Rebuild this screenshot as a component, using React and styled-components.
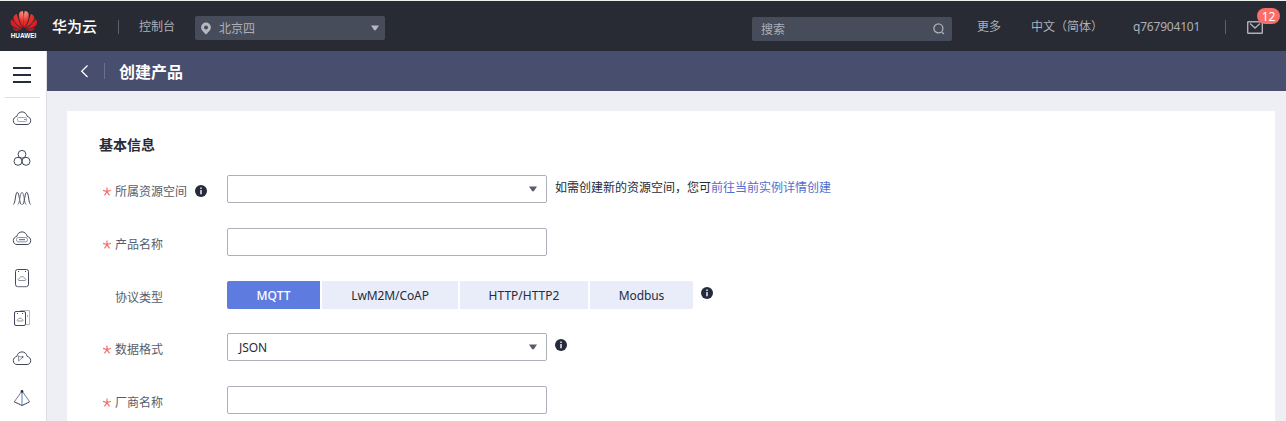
import React from "react";
import styled, { createGlobalStyle } from "styled-components";

const GlobalStyle = createGlobalStyle`
  * { box-sizing: border-box; }
  body {
    margin: 0;
    background: #eeeff5;
    font: 12px/18px "Noto Sans", "Noto Sans CJK SC", sans-serif;
    color: #252b3a;
    overflow: hidden;
  }
  svg { display: block; flex: none; }
`;

const Page = styled.div`
  height: 421px;
  display: flex;
  flex-direction: column;
  overflow: hidden;
`;

const Header = styled.header`
  height: 51px;
  flex: none;
  display: flex;
  align-items: center;
  border-top: 1px solid #eef0ee;
  background: #282b33;
  color: #adb0b8;
  padding: 2px 0 0 10px;
  white-space: nowrap;
`;

const Brand = styled.div`
  width: 108px;
  padding-bottom: 2px;
  display: flex;
  align-items: center;
  gap: 14px;
  color: #fff;
  font-size: 15px;
  font-weight: 500;
`;

const Divider = styled.i`
  width: 1px;
  height: ${(p) => p.$height || 14}px;
  margin-left: ${(p) => p.$gap || 0}px;
  background: ${(p) => p.$color || "#5e6168"};
  flex: none;
`;

const NavText = styled.span`
  width: ${(p) => p.$width}px;
  margin-left: ${(p) => p.$gap}px;
  letter-spacing: ${(p) => p.$spacing || 0}px;
  flex: none;
`;

const HeaderField = styled.div`
  width: ${(p) => p.$width}px;
  height: 24px;
  margin-left: ${(p) => p.$gap}px;
  margin-top: ${(p) => p.$drop}px;
  padding: 0 ${(p) => p.$right}px 0 ${(p) => p.$left}px;
  display: flex;
  align-items: center;
  background: #464c59;
  border-radius: 2px;
  flex: none;
`;

const FieldText = styled.span`
  flex: 1;
  margin-left: ${(p) => p.$gap || 0}px;
  padding-top: 1px;
`;

const Mail = styled.div`
  position: relative;
  margin-left: 21px;
`;

const Badge = styled.span`
  position: absolute;
  left: 10px;
  top: -13px;
  width: 23px;
  height: 16px;
  border-radius: 8px;
  background: #fa6d68;
  color: #fff;
  line-height: 17px;
  text-align: center;
`;

const Body = styled.div`
  flex: 1;
  min-height: 0;
  display: flex;
`;

const Sidebar = styled.nav`
  width: 47px;
  flex: none;
  background: #fff;
  border-right: 1px solid #dddfe7;
  display: flex;
  flex-direction: column;
`;

const MenuButton = styled.div`
  height: 47px;
  flex: none;
  margin: 0 6px 0 5px;
  padding: 16px 0 0 8px;
  border-bottom: 1px solid #dddee6;
`;

const SideItem = styled.div`
  height: 40px;
  flex: none;
  display: flex;
  align-items: center;
  padding-left: 12px;
`;

const Main = styled.main`
  flex: 1;
  min-width: 0;
  display: flex;
  flex-direction: column;
`;

const TitleBar = styled.div`
  height: 40px;
  flex: none;
  display: flex;
  align-items: center;
  padding-left: 33px;
  background: #484e6e;
`;

const Title = styled.h1`
  margin: 0 0 0 14px;
  padding-top: 1px;
  font-size: 16px;
  line-height: 22px;
  font-weight: 700;
  color: #fff;
`;

const Card = styled.section`
  flex: 1;
  min-height: 0;
  margin: 20px 11px 0 20px;
  padding: 24px 32px 0;
  background: #fff;
`;

const Heading = styled.h2`
  margin: 0 0 20px;
  font-size: 14px;
  line-height: 20px;
  font-weight: 700;
`;

const Row = styled.div`
  height: 28px;
  margin-bottom: ${(p) => p.$after}px;
  display: flex;
`;

const Label = styled.div`
  width: 128px;
  padding: 5px 0 0 4px;
  flex: none;
  display: flex;
  align-items: flex-start;
  color: #575d6c;
  line-height: 24px;
`;

const Star = styled.span`
  width: 12px;
  padding-top: 7px;
`;

const Input = styled.div`
  width: 320px;
  height: 28px;
  flex: none;
  display: flex;
  align-items: center;
  justify-content: space-between;
  padding: 0 9px 0 11px;
  border: 1px solid #adb0b8;
  border-radius: 2px;
  background: #fff;
`;

const InputText = styled.span`
  padding-top: 1px;
  letter-spacing: -0.1px;
`;

const InfoSlot = styled.span`
  margin: ${(p) => p.$top}px 0 0 8px;
`;

const Hint = styled.span`
  margin: 4px 0 0 8px;
`;

const Link = styled.a`
  color: #526ecc;
`;

const Tabs = styled.div`
  display: flex;
  gap: 2px;
  border-radius: 2px;
  overflow: hidden;
`;

const Tab = styled.button`
  width: ${(p) => p.$width}px;
  height: 28px;
  padding: 1px 0 0;
  border: 0;
  font: inherit;
  letter-spacing: ${(p) => p.$spacing}px;
  background: ${(p) => (p.$active ? "#5e7ce0" : "#e9edfa")};
  color: ${(p) => (p.$active ? "#fff" : "#252b3a")};
  font-weight: ${(p) => (p.$active ? 500 : 400)};
`;

const Logo = () => (
  <svg width="28" height="32" viewBox="0 0 28 32">
    <defs>
      <radialGradient id="petal" gradientUnits="userSpaceOnUse" cx="14" cy="2" r="20">
        <stop offset="0" stopColor="#f9a090" />
        <stop offset=".45" stopColor="#e8302b" />
        <stop offset="1" stopColor="#d9101c" />
      </radialGradient>
    </defs>
    <g fill="url(#petal)">
      <path d="M13.300 18C10.500 13 8.300 8.500 8.900 4.200C9.200 2.200 11 1.200 12.900 1.100C14 6 14.100 12 13.300 18Z" />
      <path d="M14.300 18C17.100 13 19.300 8.500 18.700 4.200C18.400 2.200 16.600 1.200 14.700 1.100C13.600 6 13.500 12 14.300 18Z" />
      <path d="M12.500 18.300C8 15.500 3.800 12 3.300 8.500C3.100 6.200 4.600 4.600 6.700 3.900C8 9 10 14 12.500 18.300Z" />
      <path d="M15.100 18.300C19.600 15.500 23.800 12 24.300 8.500C24.500 6.200 23 4.600 20.900 3.900C19.600 9 17.600 14 15.100 18.300Z" />
      <path d="M11.800 19C7 18.800 2.300 17.200 1 14.500C.2 12.600.6 10.800 1.700 9.300C4.700 13.200 8.200 16.500 11.800 19Z" />
      <path d="M15.800 19C20.600 18.800 25.300 17.200 26.600 14.500C27.400 12.600 27 10.800 25.900 9.300C22.900 13.200 19.400 16.500 15.800 19Z" />
      <path d="M11.500 19.600C9 21.200 4.600 21.700 2.300 18C5 18.900 8.200 19.400 11.500 19.600Z" />
      <path d="M16.100 19.600C18.600 21.200 23 21.700 25.300 18C22.600 18.900 19.400 19.400 16.100 19.600Z" />
    </g>
    <text x="0.700" y="28.300" textLength="25.600" lengthAdjust="spacingAndGlyphs" fill="#fff" fontFamily="Liberation Sans, sans-serif" fontWeight="700" fontSize="7">HUAWEI</text>
  </svg>
);

const Caret = ({ color = "#575d6c", width = 8 }) => (
  <svg width={width} height="6" viewBox="0 0 8 6">
    <path d="M0 0.500H8L4.800 5.200H3.200Z" fill={color} />
  </svg>
);

const Pin = () => (
  <svg width="10" height="13" viewBox="0 0 10 13">
    <path fillRule="evenodd" fill="#b5b8bf" d="M5 .5a4.900 4.900 0 0 1 4.900 4.900C9.900 8.200 7 10 5 12.700C3 10 .1 8.200.1 5.400A4.900 4.900 0 0 1 5 .5ZM5 3.400a2 2 0 1 0 0 4a2 2 0 0 0 0-4Z" />
  </svg>
);

const Magnifier = () => (
  <svg width="12" height="12" viewBox="0 0 12 12" fill="none" stroke="#adb0b8" strokeWidth="1.300">
    <circle cx="5.400" cy="5.400" r="4.500" />
    <path d="M8.600 9L11 10.900" />
  </svg>
);

const Envelope = () => (
  <svg width="16" height="13" viewBox="0 0 16 13" fill="none" stroke="#adb0b8" strokeWidth="1.400">
    <rect x=".7" y=".7" width="14.600" height="11.600" rx=".5" />
    <path d="M3 2.500L8 7L13 2.500" />
  </svg>
);

const Info = () => (
  <svg width="12" height="12" viewBox="0 0 12 12">
    <circle cx="6" cy="6" r="6" fill="#252b3a" />
    <path d="M5.200 2.500H6.800V3.900H5.200ZM5.200 4.900H6.800V9.300H5.200Z" fill="#dfe4ee" />
  </svg>
);

const Asterisk = () => (
  <svg width="9" height="9" viewBox="0 0 9 9" stroke="#f66f6a" strokeWidth="1.200" fill="none">
    <path d="M4 .5V4.600M0 3.300L4 4.600L8 3.300M4 4.600L1.500 8.300M4 4.600L6.500 8.300" />
  </svg>
);

const Glyph = ({ children }) => (
  <svg width="20" height="20" viewBox="0 0 20 20" fill="none" stroke="#41485c" strokeWidth="1" strokeLinejoin="round">
    {children}
  </svg>
);

const cloud = "M5 16.500C2.700 16.500 1.300 14.800 1.300 12.600C1.300 10.500 2.700 8.900 4.800 8.400C5.400 5.700 7.400 3.900 10 3.900C12.600 3.900 14.600 5.700 15.200 8.400C17.300 8.900 18.700 10.500 18.700 12.600C18.700 14.800 17.300 16.500 15 16.500Z";

const sideIcons = [
  <>
    <path d={cloud} />
    <rect x="5.500" y="9.500" width="9" height="4" rx="1.200" stroke="#a2a6b0" />
    <path d="M12.500 11.500h1" stroke="#252b3a" />
  </>,
  <>
    <circle cx="10" cy="6.300" r="3.900" />
    <circle cx="6" cy="13.300" r="4" />
    <circle cx="14" cy="13.300" r="4" />
  </>,
  <>
    <path d="M1.300 16.500C3.600 15.500 3.200 4.300 5.300 4.300S7.400 16.500 9.500 16.500" />
    <path d="M5.700 16.500C7.900 16.500 7.800 4.300 10 4.300S12.100 16.500 14.300 16.500" stroke="#747a88" />
    <path d="M10.500 16.500C12.600 16.500 12.600 4.300 14.700 4.300S16.400 15.500 18.700 16.500" />
  </>,
  <>
    <path d={cloud} />
    <rect x="4.500" y="9.500" width="11" height="4.400" rx="2" stroke="#8d929e" />
    <path d="M7 11.700h6" stroke="#575d6c" />
  </>,
  <>
    <rect x="3.500" y="1.500" width="13" height="17" rx="2" />
    <path d="M5 19H15" stroke="#c0c3ca" />
    <path d="M6 3.500h1M13 3.500h1" />
    <path d="M7 12.500H13C14 12.500 14 10.600 12.500 10.400C12 8 8 8 7.500 10.400C6 10.600 6 12.500 7 12.500Z" stroke="#8d929e" />
  </>,
  <>
    <path d="M8 2.500H17.500V16.500H14" stroke="#b5b8c0" />
    <rect x="2.500" y="3.500" width="11" height="14" rx="1.500" />
    <path d="M5 5.500h1M10 5.500h1" />
    <path d="M15.500 7v2" stroke="#b5b8c0" />
    <path d="M5.800 13H10.500C11.400 13 11.200 11.500 10.300 11.400C9.800 9.700 6.600 9.700 6.100 11.400C5 11.500 5 13 5.800 13Z" stroke="#8d929e" />
  </>,
  <>
    <path d={cloud} />
    <path d="M6.500 7.500V13L10.500 9.500M6 8.500L10.500 9" stroke="#8d929e" />
    <circle cx="10.700" cy="9" r=".5" />
  </>,
  <>
    <path d="M10 3L2.300 13.800L10 17.500L17.700 13.800Z" stroke="#747a88" />
    <path d="M10 3V17.500" stroke="#4d82cc" />
    <path d="M2.300 13.800L10 17.500L17.700 13.800" strokeDasharray="1.500 1" />
    <circle cx="10" cy="3.400" r="1.300" fill="#252b3a" stroke="none" />
  </>,
];

const protocols = [
  { name: "MQTT", width: 93, spacing: 0, active: true },
  { name: "LwM2M/CoAP", width: 136, spacing: -0.1 },
  { name: "HTTP/HTTP2", width: 128, spacing: 0 },
  { name: "Modbus", width: 103, spacing: -0.1 },
];

const FormRow = ({ label, required = true, labelInfo, after = 25, children }) => (
  <Row $after={after}>
    <Label>
      <Star>{required && <Asterisk />}</Star>
      {label}
      {labelInfo && <InfoSlot $top={5}><Info /></InfoSlot>}
    </Label>
    {children}
  </Row>
);

export default function App() {
  return (
    <Page>
      <GlobalStyle />
      <Header>
        <Brand><Logo />华为云</Brand>
        <Divider />
        <NavText $gap={20} $width={36}>控制台</NavText>
        <HeaderField $gap={20} $width={190} $left={6} $right={6} $drop={2}>
          <Pin />
          <FieldText $gap={8}>北京四</FieldText>
          <Caret color="#b5b8bf" />
        </HeaderField>
        <HeaderField $gap={367} $width={200} $left={9} $right={7} $drop={4}>
          <FieldText>搜索</FieldText>
          <Magnifier />
        </HeaderField>
        <NavText $gap={25} $width={24}>更多</NavText>
        <NavText $gap={30} $width={72}>中文（简体）</NavText>
        <NavText $gap={30} $width={66} $spacing={-0.2}>q767904101</NavText>
        <Divider $gap={26} />
        <Mail><Envelope /><Badge>12</Badge></Mail>
      </Header>
      <Body>
        <Sidebar>
          <MenuButton>
            <svg width="18" height="16" viewBox="0 0 18 16"><path d="M0 1H18M0 8H18M0 15H18" stroke="#252b3a" strokeWidth="2" /></svg>
          </MenuButton>
          {sideIcons.map((icon, i) => <SideItem key={i}><Glyph>{icon}</Glyph></SideItem>)}
        </Sidebar>
        <Main>
          <TitleBar>
            <svg width="10" height="14" viewBox="0 0 10 14"><path d="M7.500 1.500L1.700 7.200L7.500 13" fill="none" stroke="#fff" strokeWidth="1.300" /></svg>
            <Divider $gap={14} $height={16} $color="#6b7090" />
            <Title>创建产品</Title>
          </TitleBar>
          <Card>
            <Heading>基本信息</Heading>
            <FormRow label="所属资源空间" labelInfo>
              <Input><span /><Caret /></Input>
              <Hint>如需创建新的资源空间，您可<Link>前往当前实例详情创建</Link></Hint>
            </FormRow>
            <FormRow label="产品名称"><Input /></FormRow>
            <FormRow label="协议类型" required={false} after={24}>
              <Tabs>
                {protocols.map((p) => (
                  <Tab key={p.name} $width={p.width} $spacing={p.spacing} $active={p.active}>{p.name}</Tab>
                ))}
              </Tabs>
              <InfoSlot $top={6}><Info /></InfoSlot>
            </FormRow>
            <FormRow label="数据格式">
              <Input><InputText>JSON</InputText><Caret /></Input>
              <InfoSlot $top={6}><Info /></InfoSlot>
            </FormRow>
            <FormRow label="厂商名称"><Input /></FormRow>
          </Card>
        </Main>
      </Body>
    </Page>
  );
}
